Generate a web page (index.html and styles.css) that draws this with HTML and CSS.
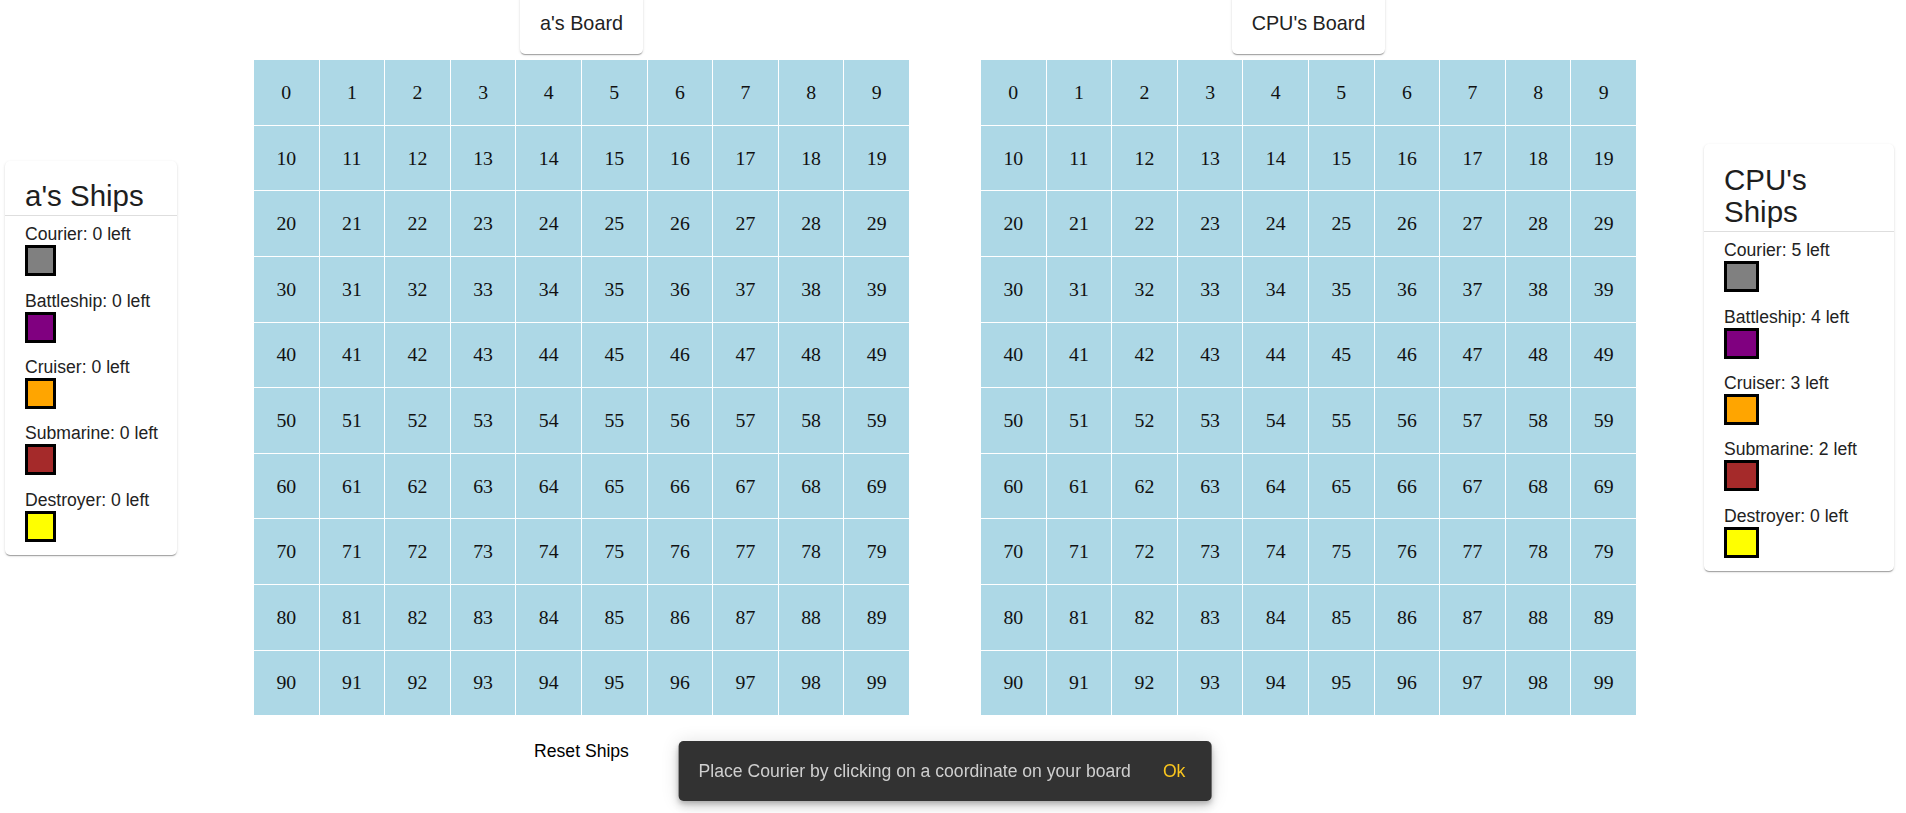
FILE: index.html
```html
<!DOCTYPE html>
<html lang="en">
<head>
<meta charset="utf-8">
<title>Battleship</title>
<link rel="stylesheet" href="styles.css">
</head>
<body>
<div class="game">
  <div class="ship-card ship-card--left">
    <div class="ship-card__title">a's Ships</div>
    <div class="ship-card__items">
      <div class="ship"><div class="ship__label">Courier: 0 left</div><div class="ship__swatch ship__swatch--courier"></div></div>
      <div class="ship"><div class="ship__label">Battleship: 0 left</div><div class="ship__swatch ship__swatch--battleship"></div></div>
      <div class="ship"><div class="ship__label">Cruiser: 0 left</div><div class="ship__swatch ship__swatch--cruiser"></div></div>
      <div class="ship"><div class="ship__label">Submarine: 0 left</div><div class="ship__swatch ship__swatch--submarine"></div></div>
      <div class="ship"><div class="ship__label">Destroyer: 0 left</div><div class="ship__swatch ship__swatch--destroyer"></div></div>
    </div>
  </div>

  <div class="board board--player">
    <div class="board__label">a's Board</div>
    <div class="board__grid" id="grid-player"></div>
  </div>

  <div class="board board--cpu">
    <div class="board__label">CPU's Board</div>
    <div class="board__grid" id="grid-cpu"></div>
  </div>

  <div class="ship-card ship-card--right">
    <div class="ship-card__title">CPU's Ships</div>
    <div class="ship-card__items">
      <div class="ship"><div class="ship__label">Courier: 5 left</div><div class="ship__swatch ship__swatch--courier"></div></div>
      <div class="ship"><div class="ship__label">Battleship: 4 left</div><div class="ship__swatch ship__swatch--battleship"></div></div>
      <div class="ship"><div class="ship__label">Cruiser: 3 left</div><div class="ship__swatch ship__swatch--cruiser"></div></div>
      <div class="ship"><div class="ship__label">Submarine: 2 left</div><div class="ship__swatch ship__swatch--submarine"></div></div>
      <div class="ship"><div class="ship__label">Destroyer: 0 left</div><div class="ship__swatch ship__swatch--destroyer"></div></div>
    </div>
  </div>

  <div class="controls">
    <button class="reset-btn" type="button">Reset Ships</button>
  </div>
</div>

<div class="snackbar">
  <span class="snackbar__message">Place Courier by clicking on a coordinate on your board</span>
  <span class="snackbar__action">Ok</span>
</div>

<script>
  ['grid-player', 'grid-cpu'].forEach(function (id) {
    var g = document.getElementById(id);
    var html = '';
    for (var i = 0; i < 100; i++) {
      html += '<div class="board__cell">' + i + '</div>';
    }
    g.innerHTML = html;
  });
</script>
</body>
</html>
```

FILE: styles.css
```css
html, body {
  margin: 0;
  padding: 0;
  background: #ffffff;
}

body {
  font-family: "Liberation Sans", Arial, sans-serif;
  color: #222222;
  overflow: hidden;
}

.game {
  display: grid;
  grid-template-columns: 5px 172px 77px 655px 72px 655px 68px 190px;
  grid-template-rows: auto auto;
  align-items: center;
}

/* ---------- ship cards ---------- */
.ship-card {
  background: #ffffff;
  border-radius: 5px;
  box-shadow: 0 2px 1px -1px rgba(0, 0, 0, 0.2),
              0 1px 1px 0 rgba(0, 0, 0, 0.14),
              0 1px 3px 0 rgba(0, 0, 0, 0.12);
  grid-row: 1;
}

.ship-card--left {
  grid-column: 2;
  width: 172px;
}

.ship-card--right {
  grid-column: 8;
  width: 190px;
}

.ship-card__title {
  font-size: 29.5px;
  line-height: 32.4px;
  color: #1e1e1e;
  padding: 19.3px 20px 2.3px;
  border-bottom: 1px solid #dedede;
}

.ship-card__items {
  padding: 7.5px 20px 13px;
}

.ship {
  margin-bottom: 13.4px;
}

.ship:last-child {
  margin-bottom: 0;
}

.ship__label {
  font-size: 17.6px;
  line-height: 22px;
  color: #222222;
  white-space: nowrap;
}

.ship__swatch {
  width: 23.3%;
  height: 31px;
  box-sizing: border-box;
  border: 3px solid #000000;
}

.ship__swatch--courier { background: #808080; }
.ship__swatch--battleship { background: #800080; }
.ship__swatch--cruiser { background: #ffa500; }
.ship__swatch--submarine { background: #a52a2a; }
.ship__swatch--destroyer { background: #ffff00; }

/* ---------- boards ---------- */
.board {
  grid-row: 1;
  display: flex;
  flex-direction: column;
  align-items: center;
}

.board--player { grid-column: 4; }
.board--cpu { grid-column: 6; }

.board__label {
  margin-top: -6px;
  padding: 18px 20px 19.3px;
  font-size: 19.8px;
  color: #222222;
  background: #ffffff;
  border-radius: 5px;
  box-shadow: 0 2px 1px -1px rgba(0, 0, 0, 0.2),
              0 1px 1px 0 rgba(0, 0, 0, 0.14),
              0 1px 3px 0 rgba(0, 0, 0, 0.12);
}

.board__grid {
  margin-top: 6px;
  width: 655px;
  height: 655px;
  display: grid;
  grid-template-columns: repeat(10, 1fr);
  grid-template-rows: repeat(10, 1fr);
  gap: 1px;
  background: #ffffff;
}

.board__cell {
  background: #add8e6;
  display: flex;
  align-items: center;
  justify-content: center;
  font-family: "Liberation Serif", "Times New Roman", serif;
  font-size: 19.8px;
  color: #111111;
}

/* ---------- controls ---------- */
.controls {
  grid-row: 2;
  grid-column: 4;
  display: flex;
  justify-content: center;
  padding-top: 19px;
}

.reset-btn {
  font-family: "Liberation Sans", Arial, sans-serif;
  font-size: 17.6px;
  line-height: 20px;
  color: #000000;
  background: transparent;
  border: none;
  padding: 7px 10px;
  cursor: pointer;
}

/* ---------- snackbar ---------- */
.snackbar {
  position: fixed;
  left: 50%;
  bottom: 12px;
  transform: translateX(-50%);
  margin-left: -8px;
  height: 60px;
  box-sizing: border-box;
  display: flex;
  align-items: center;
  padding: 0 26px 0 20px;
  background: #323232;
  border-radius: 5px;
  box-shadow: 0 3px 5px -1px rgba(0, 0, 0, 0.2),
              0 6px 10px 0 rgba(0, 0, 0, 0.14),
              0 1px 18px 0 rgba(0, 0, 0, 0.12);
  font-size: 17.6px;
  white-space: nowrap;
}

.snackbar__message {
  color: #cfcfcf;
}

.snackbar__action {
  margin-left: 32px;
  color: #f9c51e;
}
```
